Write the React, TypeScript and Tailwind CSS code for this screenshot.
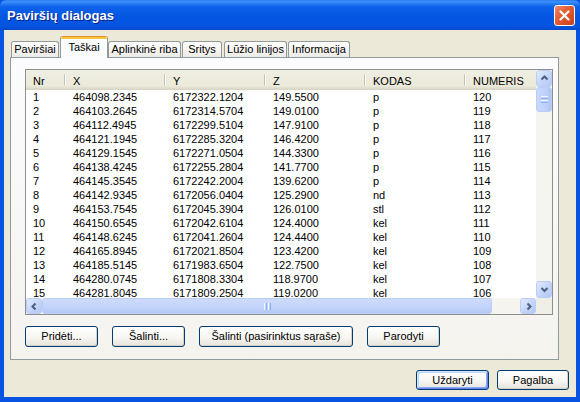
import React from 'react'

const rows = [
  ['1', '464098.2345', '6172322.1204', '149.5500', 'p', '120'],
  ['2', '464103.2645', '6172314.5704', '149.0100', 'p', '119'],
  ['3', '464112.4945', '6172299.5104', '147.9100', 'p', '118'],
  ['4', '464121.1945', '6172285.3204', '146.4200', 'p', '117'],
  ['5', '464129.1545', '6172271.0504', '144.3300', 'p', '116'],
  ['6', '464138.4245', '6172255.2804', '141.7700', 'p', '115'],
  ['7', '464145.3545', '6172242.2004', '139.6200', 'p', '114'],
  ['8', '464142.9345', '6172056.0404', '125.2900', 'nd', '113'],
  ['9', '464153.7545', '6172045.3904', '126.0100', 'stl', '112'],
  ['10', '464150.6545', '6172042.6104', '124.4000', 'kel', '111'],
  ['11', '464148.6245', '6172041.2604', '124.4400', 'kel', '110'],
  ['12', '464165.8945', '6172021.8504', '123.4200', 'kel', '109'],
  ['13', '464185.5145', '6171983.6504', '122.7500', 'kel', '108'],
  ['14', '464280.0745', '6171808.3304', '118.9700', 'kel', '107'],
  ['15', '464281.8045', '6171809.2504', '119.0200', 'kel', '106'],
]

const cols = [
  { label: 'Nr', w: 'w-[40px]' },
  { label: 'X', w: 'w-[100px]' },
  { label: 'Y', w: 'w-[100px]' },
  { label: 'Z', w: 'w-[100px]' },
  { label: 'KODAS', w: 'w-[100px]' },
  { label: 'NUMERIS', w: 'w-[100px]' },
]

const tabs = [
  { label: 'Paviršiai', cls: 'ml-[1px] w-[48px]' },
  { label: 'Taškai', cls: 'ml-[1px] w-[48px]', active: true },
  { label: 'Aplinkinė riba', cls: 'ml-[0px] w-[73px]' },
  { label: 'Sritys', cls: 'ml-[1px] w-[40px]' },
  { label: 'Lūžio linijos', cls: 'ml-[2px] w-[63px]' },
  { label: 'Informacija', cls: 'ml-[1px] w-[62px]' },
]

const chevrons = {
  up: 'M1.5 5.5L4.5 2.5L7.5 5.5',
  down: 'M1.5 3L4.5 6L7.5 3',
  left: 'M5.5 1.5L2.5 4.5L5.5 7.5',
  right: 'M3.5 1.5L6.5 4.5L3.5 7.5',
}

function ScrollBtn({ dir, cls }: { dir: keyof typeof chevrons; cls: string }) {
  return (
    <div className={`${cls} rounded-[3px] border border-[#bccdf5] bg-[linear-gradient(135deg,#e2ebfe_0%,#c6d6fb_50%,#b4c8f4_100%)] flex items-center justify-center`}>
      <svg width="9" height="9" viewBox="0 0 9 9">
        <path d={chevrons[dir]} fill="none" stroke="#4d6185" strokeWidth="2" />
      </svg>
    </div>
  )
}

function XpButton({ label, w, def }: { label: string; w: string; def?: boolean }) {
  return (
    <div
      className={`${w} rounded-[3px] border border-[#003c74] bg-[linear-gradient(to_bottom,#ffffff_0%,#f7f6f2_55%,#e6e3da_100%)] flex items-center justify-center text-[11px] text-black whitespace-nowrap ${
        def
          ? 'shadow-[inset_1px_1px_0_#cee7ff,inset_-1px_-1px_0_#6982ee,inset_2px_2px_0_#bcd4f6,inset_-2px_-2px_0_#89adf4]'
          : 'shadow-[inset_-1px_-1px_0_#d6d0c5]'
      }`}
    >
      {label}
    </div>
  )
}

export default function App() {
  return (
    <div className="w-[580px] h-[402px] flex flex-col bg-[#0753e2] font-['Liberation_Sans',Arial,sans-serif] select-none">
      {/* title bar */}
      <div className="h-[30px] flex items-center justify-between pl-[7px] pr-[5px] bg-[linear-gradient(to_bottom,#2b7df2_0%,#3d8ff8_6%,#0d62ea_22%,#0457e3_55%,#0454e0_88%,#0449cc_100%)] rounded-t-[6px]">
        <span className="text-white font-bold text-[13px] pt-[2px] [text-shadow:1px_1px_#0a1e8a]">Paviršių dialogas</span>
        <div className="w-[21px] h-[21px] rounded-[3px] border border-white bg-[linear-gradient(135deg,#ee8a6c_0%,#e25a30_45%,#c9411b_100%)] flex items-center justify-center">
          <svg width="11" height="11" viewBox="0 0 11 11">
            <path d="M1.5 1.5L9.5 9.5M9.5 1.5L1.5 9.5" stroke="white" strokeWidth="2.2" strokeLinecap="round" />
          </svg>
        </div>
      </div>

      {/* client area */}
      <div className="flex-1 mx-[4px] mb-[5px] bg-[#ece9d8] flex flex-col pl-[6px] pt-[6px]">
        {/* tabs */}
        <div className="h-[21px] flex items-end">
          {tabs.map(t =>
            t.active ? (
              <div
                key={t.label}
                className={`${t.cls} h-[22px] mb-[-1px] relative z-10 flex flex-col rounded-t-[3px] overflow-hidden border-x border-[#919b9c] bg-[#fcfcfe]`}
              >
                <div className="h-[1px] bg-[#e68b2c]" />
                <div className="h-[2px] bg-[#ffc73c]" />
                <div className="flex-1 flex items-center justify-center text-[11px] text-black pb-[3px]">{t.label}</div>
              </div>
            ) : (
              <div
                key={t.label}
                className={`${t.cls} h-[16px] flex items-center justify-center rounded-t-[3px] border-x border-t border-[#919b9c] bg-[linear-gradient(to_bottom,#ffffff,#ecebe6)] text-[11px] text-black whitespace-nowrap`}
              >
                {t.label}
              </div>
            )
          )}
        </div>

        {/* panel */}
        <div className="w-[549px] h-[303px] border border-[#919b9c] bg-[linear-gradient(to_bottom,#fcfcfe,#f4f3ee)] pl-[14px] pt-[11px]">
          {/* list view */}
          <div className="w-[528px] h-[246px] border border-[#8e8f8f] bg-white grid grid-cols-[510px_16px] grid-rows-[228px_16px]">
            <div className="overflow-hidden flex flex-col">
              <div className="h-[20px] shrink-0 flex bg-[linear-gradient(to_bottom,#efeee3,#ebeadb_80%,#d6d2c2)] text-[11px] text-black">
                {cols.map(c => (
                  <div key={c.label} className={`${c.w} shrink-0 h-full flex items-center pl-[7px] pt-[2px] relative`}>
                    {c.label}
                    <div className="absolute right-0 top-[4px] bottom-[4px] w-[2px] border-l border-[#c7c5b2] border-r border-r-white" />
                  </div>
                ))}
              </div>
              {rows.map(r => (
                <div key={r[0]} className="h-[14px] shrink-0 flex text-[11px] leading-[14px] text-black">
                  {r.map((v, i) => (
                    <div key={i} className={`${cols[i].w} shrink-0 pl-[7px] whitespace-nowrap`}>
                      {v}
                    </div>
                  ))}
                </div>
              ))}
            </div>

            {/* vertical scrollbar */}
            <div className="flex flex-col bg-[#f5f4ef]">
              <ScrollBtn dir="up" cls="h-[17px] w-[16px]" />
              <div className="h-[25px] w-[16px] rounded-[3px] border border-[#bccdf5] bg-[linear-gradient(to_right,#c9d8fc,#bfd1fa_60%,#b1c6f4)] flex flex-col items-center justify-center gap-[1px]">
                <div className="w-[7px] h-[1px] bg-[#eef4fe]" />
                <div className="w-[7px] h-[1px] bg-[#8cb0f8]" />
                <div className="w-[7px] h-[1px] bg-[#eef4fe]" />
                <div className="w-[7px] h-[1px] bg-[#8cb0f8]" />
              </div>
              <div className="flex-1" />
              <ScrollBtn dir="down" cls="h-[17px] w-[16px]" />
            </div>

            {/* horizontal scrollbar */}
            <div className="flex bg-[#f5f4ef]">
              <ScrollBtn dir="left" cls="w-[16px] h-[16px]" />
              <div className="w-[450px] h-[16px] rounded-[3px] border border-[#bccdf5] bg-[linear-gradient(to_bottom,#cddbfc,#c2d3fa_60%,#b4c8f4)] flex items-center justify-center gap-[1px]">
                <div className="h-[7px] w-[1px] bg-[#eef4fe]" />
                <div className="h-[7px] w-[1px] bg-[#8cb0f8]" />
                <div className="h-[7px] w-[1px] bg-[#eef4fe]" />
                <div className="h-[7px] w-[1px] bg-[#8cb0f8]" />
              </div>
              <div className="flex-1" />
              <ScrollBtn dir="right" cls="w-[16px] h-[16px]" />
            </div>
            <div className="bg-[#efeee7]" />
          </div>

          {/* panel buttons */}
          <div className="flex gap-[14px] mt-[11px] h-[21px]">
            <XpButton label="Pridėti..." w="w-[73px]" />
            <XpButton label="Šalinti..." w="w-[73px]" />
            <XpButton label="Šalinti (pasirinktus sąraše)" w="w-[154px]" />
            <XpButton label="Parodyti" w="w-[73px]" />
          </div>
        </div>

        {/* dialog buttons */}
        <div className="flex justify-end gap-[8px] pr-[7px] mt-[10px] h-[20px]">
          <XpButton label="Uždaryti" w="w-[73px]" def />
          <XpButton label="Pagalba" w="w-[72px]" />
        </div>
      </div>
    </div>
  )
}
